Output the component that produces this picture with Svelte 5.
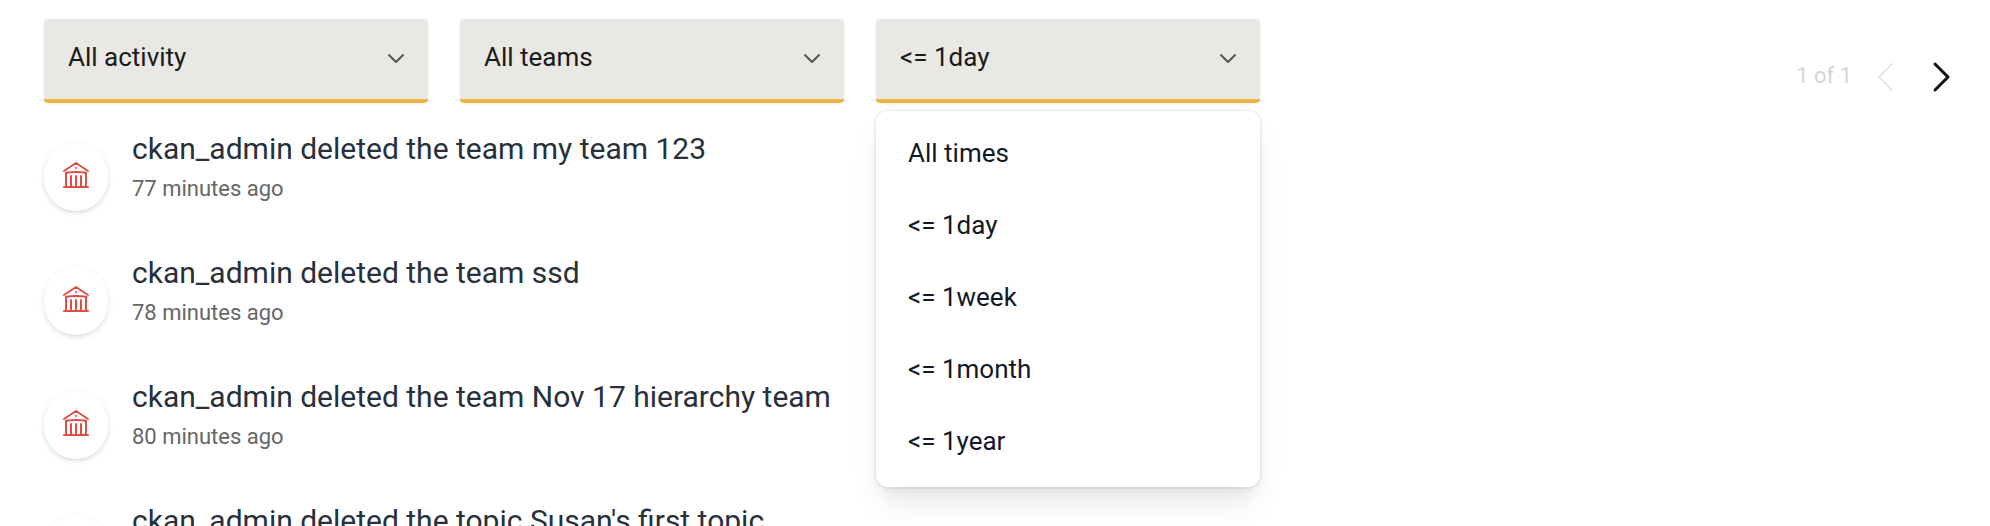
<script>
  const activities = ['All activity', 'New', 'Changed', 'Deleted'];
  const teams = ['All teams'];
  const times = ['All times', '<= 1day', '<= 1week', '<= 1month', '<= 1year'];

  let activity = $state('All activity');
  let team = $state('All teams');
  let time = $state('<= 1day');
  let open = $state(true);

  const feed = [
    { text: 'ckan_admin deleted the team my team 123', when: '77 minutes ago' },
    { text: 'ckan_admin deleted the team ssd', when: '78 minutes ago' },
    { text: 'ckan_admin deleted the team Nov 17 hierarchy team', when: '80 minutes ago' },
    { text: "ckan_admin deleted the topic Susan's first topic", when: '' }
  ];

  function choose(value) {
    time = value;
    open = false;
  }
</script>

{#snippet chevron()}
  <svg class="caret" viewBox="0 0 24 24" aria-hidden="true"><path d="M5 9l7 7 7-7" /></svg>
{/snippet}

<main>
  <header>
    <div class="filters">
      <div class="field">
        <select aria-label="Activity" bind:value={activity}>
          {#each activities as option}<option>{option}</option>{/each}
        </select>
        {@render chevron()}
      </div>
      <div class="field">
        <select aria-label="Team" bind:value={team}>
          {#each teams as option}<option>{option}</option>{/each}
        </select>
        {@render chevron()}
      </div>
      <div class="field">
        <select aria-label="Time" bind:value={time}>
          {#each times as option}<option>{option}</option>{/each}
        </select>
        {@render chevron()}
        {#if open}
          <ul class="menu">
            {#each times as option}
              <li><button type="button" onclick={() => choose(option)}>{option}</button></li>
            {/each}
          </ul>
        {/if}
      </div>
    </div>
    <nav aria-label="Pages">
      <span>1 of 1</span>
      <div class="arrows">
        <button type="button" class="prev" aria-label="Previous page" disabled>
          <svg viewBox="0 0 32 32" aria-hidden="true"><path d="M22 3L9 16l13 13" /></svg>
        </button>
        <button type="button" class="next" aria-label="Next page">
          <svg viewBox="0 0 32 32" aria-hidden="true"><path d="M9 3l13 13L9 29" /></svg>
        </button>
      </div>
    </nav>
  </header>

  <ul class="feed">
    {#each feed as item}
      <li>
        <span class="badge">
          <svg viewBox="0 0 24 24" aria-hidden="true">
            <path d="M12 21v-8.25M15.75 21v-8.25M8.25 21v-8.25M3 9l9-6 9 6m-1.5 12V10.332A48.36 48.36 0 0012 9.75c-2.551 0-5.056.2-7.5.582V21M3 21h18M12 6.75h.008v.008H12V6.75z" />
          </svg>
        </span>
        <div class="body">
          <p class="title">{item.text}</p>
          {#if item.when}<p class="when">{item.when}</p>{/if}
        </div>
      </li>
    {/each}
  </ul>
</main>

<style>
  :global(body) {
    margin: 0;
    background: #fff;
  }

  main {
    box-sizing: border-box;
    height: 100vh;
    overflow: hidden;
    padding: 19px 32px 0 44px;
    font-family: Roboto, 'Liberation Sans', sans-serif;
  }

  ul,
  p {
    margin: 0;
    padding: 0;
    list-style: none;
  }

  button,
  select {
    margin: 0;
    border: 0;
    font-family: inherit;
    cursor: pointer;
  }

  svg {
    display: block;
    fill: none;
    stroke: currentColor;
    stroke-linecap: round;
    stroke-linejoin: round;
  }

  header {
    display: flex;
    justify-content: space-between;
    align-items: flex-start;
    gap: 32px;
  }

  .filters {
    display: flex;
    flex: 0 1 1216px;
    gap: 32px;
  }

  .field {
    position: relative;
    flex: 1;
    min-width: 0;
  }

  select {
    display: block;
    appearance: none;
    box-sizing: border-box;
    width: 100%;
    height: 84px;
    padding: 0 60px 4px 24px;
    border-bottom: 4px solid #ebb444;
    border-radius: 4px;
    background: #e9e8e4;
    box-shadow: 0 2px 4px rgb(0 0 0 / 5%);
    color: #1a1a1a;
    font-size: 26px;
  }

  .caret {
    position: absolute;
    top: 27px;
    right: 20px;
    width: 24px;
    height: 24px;
    color: #555;
    stroke-width: 2;
    pointer-events: none;
  }

  .menu {
    position: absolute;
    z-index: 1;
    top: 92px;
    left: 0;
    right: 0;
    padding: 8px 0;
    border-radius: 12px;
    background: #fff;
    box-shadow:
      0 0 0 2px rgb(0 0 0 / 5%),
      0 20px 32px -6px rgb(0 0 0 / 10%),
      0 8px 12px -4px rgb(0 0 0 / 5%);
  }

  .menu button {
    display: block;
    width: 100%;
    padding: 14px 32px 18px;
    background: none;
    color: #111827;
    font-size: 26px;
    line-height: 40px;
    text-align: left;
  }

  nav {
    display: flex;
    align-items: center;
    gap: 18px;
    padding-top: 42px;
    color: #d1d5db;
    font-size: 22px;
    line-height: 30px;
  }

  nav span {
    padding-bottom: 2px;
    white-space: nowrap;
  }

  .arrows {
    display: flex;
    gap: 24px;
  }

  nav button {
    padding: 0;
    background: none;
  }

  nav svg {
    width: 32px;
    height: 32px;
    stroke-width: 2;
  }

  .prev {
    color: #e9e8e4;
  }

  .next {
    color: #111;
  }

  .next svg {
    stroke-width: 3;
  }

  .feed {
    padding-top: 24px;
  }

  .feed li {
    display: flex;
    align-items: flex-start;
    gap: 24px;
    height: 124px;
  }

  .badge {
    margin-top: 16px;
    padding: 16px 16px 20px;
    border-radius: 34px;
    background: #fff;
    box-shadow:
      0 2px 6px rgb(0 0 0 / 10%),
      0 2px 4px -2px rgb(0 0 0 / 10%);
    color: #e24d47;
  }

  .badge svg {
    width: 32px;
    height: 32px;
    stroke-width: 1.5;
  }

  .title {
    color: #27303b;
    font-size: 30px;
    line-height: 44px;
  }

  .when {
    color: #666;
    font-size: 22px;
    line-height: 36px;
  }
</style>
